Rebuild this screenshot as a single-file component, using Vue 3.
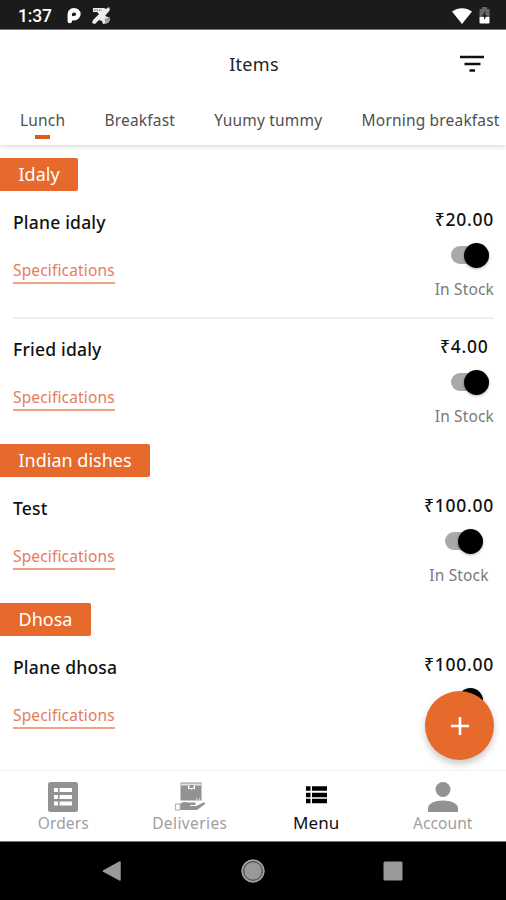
<template>
  <div class="screen">
    <div class="status-bar">
      <span class="clock">1:37</span>
      <svg class="status-p" width="14" height="17" viewBox="0 0 14 17">
        <path d="M2.800 14V7.500a4.300 4 0 1 1 4.300 3.700H6" fill="none" stroke="#fff" stroke-width="4.500" stroke-linecap="round" />
      </svg>
      <svg class="status-tools" width="19" height="18" viewBox="0 0 19 18">
        <path d="M1 1h11l2 1 3-2 1 3-5 6 3 1 2 3-2 3-5 1-1-3-3-1-4 4-3-1 1-3 6-6-2-2H1z" fill="#ececec" />
        <path d="M2 3.200h8" stroke="#777" stroke-width="1.200" stroke-dasharray="1.500 1" />
        <path d="M12.500 12l5.500-2v3l-4 4z" fill="#999" />
      </svg>
      <span class="spacer"></span>
      <svg class="wifi" width="20" height="16" viewBox="0 0 20 16">
        <path d="M0 3.500C6-1 14-1 20 3.500L10 16z" fill="#fff" />
      </svg>
      <svg class="battery" width="11" height="17" viewBox="0 0 11 17">
        <path d="M3 0h5v2h2.500v8H.5V2H3z" fill="#666" />
        <path d="M.5 10h10v5.500a1 1 0 0 1-1 1h-8a1 1 0 0 1-1-1z" fill="#fff" />
        <path d="M6.300 3.500L3 9.500h2v3.500l3.200-5H6.300z" fill="#222" />
      </svg>
    </div>

    <header class="header">
      <h1 class="title">Items</h1>
      <svg class="filter" width="24" height="18" viewBox="0 0 24 18">
        <path d="M0 2h24M4.500 9h16M9.500 15.500h5.500" stroke="#111" stroke-width="2.700" />
      </svg>
    </header>

    <nav class="tabs">
      <button
        v-for="tab in tabs"
        :key="tab"
        class="tab"
        :class="{ active: tab === activeTab }"
        @click="activeTab = tab"
      >
        {{ tab }}
      </button>
    </nav>

    <main class="content">
      <section v-for="group in groups" :key="group.name">
        <h2 class="group-name">{{ group.name }}</h2>
        <div v-for="item in group.items" :key="item.name" class="item">
          <div class="item-info">
            <div class="item-name">{{ item.name }}</div>
            <a class="item-link">Specifications</a>
          </div>
          <div class="item-side">
            <div class="item-price">₹{{ item.price }}</div>
            <div class="toggle" :class="{ off: !item.inStock }" @click="item.inStock = !item.inStock">
              <span class="knob"></span>
            </div>
            <div class="item-stock">{{ item.inStock ? 'In Stock' : 'Out of Stock' }}</div>
          </div>
        </div>
      </section>
    </main>

    <button class="fab">
      <svg width="20" height="20" viewBox="0 0 20 20">
        <path d="M10 1v18M1 10h18" stroke="#fff" stroke-width="2.600" />
      </svg>
    </button>

    <nav class="bottom-nav">
      <div class="nav-item">
        <svg width="30" height="30" viewBox="0 0 30 30">
          <rect width="30" height="30" rx="2.500" fill="#929292" />
          <path d="M6 8h4M6 15h4M6 21.500h4M11.500 8H24M11.500 15H24M11.500 21.500H24" stroke="#fff" stroke-width="3.800" />
        </svg>
        <span>Orders</span>
      </div>
      <div class="nav-item deliveries">
        <svg width="30" height="30" viewBox="0 0 30 30">
          <path d="M5.500.5h21v18h-21z" fill="#929292" />
          <path d="M6 1.500h20v2H6z" fill="#e2e2e2" />
          <path d="M13 3.500h7v4.300l-1.800-1.200-1.700 1.200-1.700-1.200L13 7.800z" fill="#fff" />
          <path d="M14.500 3h4v3h-4z" fill="#929292" />
          <path d="M21 17h1.500M24 17h1" stroke="#fff" stroke-width="1.200" />
          <path d="M5 22c3-3 6-2 8-1.500h7c1 0 1 2 0 2.500h-5v1h6l7-3.300c2-.5 3 .3 1.500 1.700L22 28H5z" fill="#929292" />
          <rect x=".6" y="22" width="4.500" height="6" fill="#fff" stroke="#aaa" />
        </svg>
        <span>Deliveries</span>
      </div>
      <div class="nav-item current">
        <svg width="30" height="30" viewBox="0 0 30 30">
          <path d="M5 6.500h4.500M5 13h4.500M5 19h4.500M11 6.500h15M11 13h15M11 19h15" stroke="#000" stroke-width="4.700" />
        </svg>
        <span>Menu</span>
      </div>
      <div class="nav-item">
        <svg width="30" height="30" viewBox="0 0 30 30">
          <circle cx="15" cy="7.500" r="7.500" fill="#929292" />
          <path d="M0 30v-4c0-4.500 7-7.500 15-7.500s15 3 15 7.500v4z" fill="#929292" />
        </svg>
        <span>Account</span>
      </div>
    </nav>

    <div class="system-bar">
      <svg width="20" height="22" viewBox="0 0 20 22">
        <path d="M1.500 11L18 2v18z" fill="#999" stroke="#999" stroke-width="1.500" stroke-linejoin="round" />
      </svg>
      <svg width="24" height="24" viewBox="0 0 24 24">
        <circle cx="12" cy="12" r="11.200" fill="#999" stroke="#aaa" />
        <circle cx="12" cy="12" r="9.300" fill="#999" stroke="#3d3d3d" />
      </svg>
      <svg width="20" height="20" viewBox="0 0 20 20">
        <rect x=".5" y=".5" width="19" height="19" rx="1.500" fill="#999" />
      </svg>
    </div>
  </div>
</template>

<script setup>
import { ref } from 'vue'

const tabs = ['Lunch', 'Breakfast', 'Yuumy tummy', 'Morning breakfast']
const activeTab = ref('Lunch')

const groups = ref([
  {
    name: 'Idaly',
    items: [
      { name: 'Plane idaly', price: '20.00', inStock: true },
      { name: 'Fried idaly', price: '4.00', inStock: true }
    ]
  },
  {
    name: 'Indian dishes',
    items: [{ name: 'Test', price: '100.00', inStock: true }]
  },
  {
    name: 'Dhosa',
    items: [{ name: 'Plane dhosa', price: '100.00', inStock: true }]
  }
])
</script>

<style>
body {
  margin: 0;
  background: #fff;
}
</style>

<style scoped>
.screen {
  position: relative;
  display: flex;
  flex-direction: column;
  width: 506px;
  height: 900px;
  overflow: hidden;
  background: #fff;
  font-family: 'Noto Sans', 'Open Sans', sans-serif;
  color: #111;
}

.screen * {
  box-sizing: border-box;
}

button {
  padding: 0;
  border: none;
  background: none;
  font-family: inherit;
  cursor: pointer;
}

.status-bar {
  flex: none;
  display: flex;
  align-items: center;
  height: 30px;
  padding: 2px 16px 0 18px;
  background: #1b1b1b;
  border-bottom: 1px solid #777;
}

.clock {
  width: 35px;
  font-family: Roboto, sans-serif;
  font-size: 17.500px;
  font-weight: 500;
  letter-spacing: -0.2px;
  color: #fff;
}

.status-p {
  margin-left: 14px;
}

.status-tools {
  margin-left: 11px;
}

.spacer {
  flex: 1;
}

.battery {
  margin-left: 7px;
}

.header {
  flex: none;
  display: grid;
  grid-template-columns: 1fr auto 1fr;
  align-items: center;
  height: 68px;
  padding: 0 22px 0 24px;
}

.title {
  grid-column: 2;
  margin: 0;
  font-size: 18px;
  font-weight: 400;
  letter-spacing: 0.3px;
  color: #222;
}

.filter {
  justify-self: end;
}

.tabs {
  flex: none;
  display: flex;
  gap: 39.300px;
  height: 47px;
  padding-left: 20px;
  box-shadow: 0 1px 5px rgba(0, 0, 0, 0.18);
  clip-path: inset(0 0 -8px 0);
}

.tab {
  display: flex;
  flex-direction: column;
  align-items: center;
  flex: none;
  padding-top: 11px;
  font-size: 15.500px;
  line-height: 22px;
  letter-spacing: 0.18px;
  color: #505050;
  white-space: nowrap;
}

.tab.active::after {
  content: '';
  width: 15px;
  height: 4px;
  margin-top: 4px;
  background: #dd5a1c;
}

.content {
  flex: 1;
  min-height: 0;
  padding-top: 12.500px;
  overflow: hidden;
}

.group-name {
  width: fit-content;
  height: 33px;
  margin: 0;
  padding: 0 18.500px;
  border-radius: 0 2px 2px 0;
  background: #e66a2b;
  font-size: 18px;
  font-weight: 400;
  line-height: 32px;
  color: #fff;
}

.item {
  display: flex;
  justify-content: space-between;
  height: 126.500px;
  margin: 0 12px 0 13px;
}

.item-info {
  padding-top: 19px;
}

.item-side {
  display: flex;
  flex-direction: column;
  align-items: center;
  padding-top: 16px;
}

.item + .item {
  border-top: 2px solid #efefef;
}

.item + .item .item-info {
  padding-top: 17.500px;
}

.item + .item .item-side {
  padding-top: 14.500px;
}

.item-name {
  font-size: 17.500px;
  font-weight: 500;
  line-height: 24px;
  letter-spacing: 0.2px;
}

.item-link {
  display: block;
  width: fit-content;
  margin-top: 24px;
  border-bottom: 2px solid #f0a287;
  font-size: 15.500px;
  line-height: 24px;
  letter-spacing: 0.15px;
  color: #e67c5c;
}

.item-price {
  font-size: 17.500px;
  font-weight: 500;
  line-height: 24px;
  letter-spacing: 0.75px;
}

.toggle {
  display: flex;
  align-items: center;
  justify-content: flex-end;
  width: 38px;
  height: 18px;
  margin: 15.500px 0 0 11px;
  border-radius: 9px;
  background: #a9a9a9;
}

.toggle.off {
  justify-content: flex-start;
}

.knob {
  width: 25px;
  height: 25px;
  border-radius: 50%;
  background: #000;
  box-shadow: 0 1px 3px rgba(0, 0, 0, 0.3);
}

.item-stock {
  margin-top: 13.500px;
  font-size: 15.500px;
  line-height: 22px;
  letter-spacing: 0.15px;
  color: #7a7a7a;
}

.fab {
  position: absolute;
  right: 12px;
  bottom: 140px;
  display: flex;
  align-items: center;
  justify-content: center;
  width: 69px;
  height: 69px;
  border-radius: 50%;
  background: #e66a2b;
  box-shadow: 0 4px 7px rgba(0, 0, 0, 0.22);
}

.bottom-nav {
  flex: none;
  display: grid;
  grid-template-columns: repeat(4, 1fr);
  height: 71px;
  border-top: 1px solid #f2f2f2;
  background: #fff;
}

.nav-item {
  display: flex;
  flex-direction: column;
  align-items: center;
  padding-top: 11px;
  font-size: 15.500px;
  line-height: 22px;
  letter-spacing: 0.1px;
  color: #a0a0a0;
}

.nav-item svg {
  flex: none;
}

.nav-item.deliveries {
  letter-spacing: 0.4px;
}

.nav-item.current {
  font-size: 17px;
  color: #111;
}

.system-bar {
  flex: none;
  display: flex;
  align-items: center;
  justify-content: space-between;
  height: 59px;
  padding: 0 103px 0 102px;
  border-top: 1px solid #777;
  background: #000;
}
</style>
